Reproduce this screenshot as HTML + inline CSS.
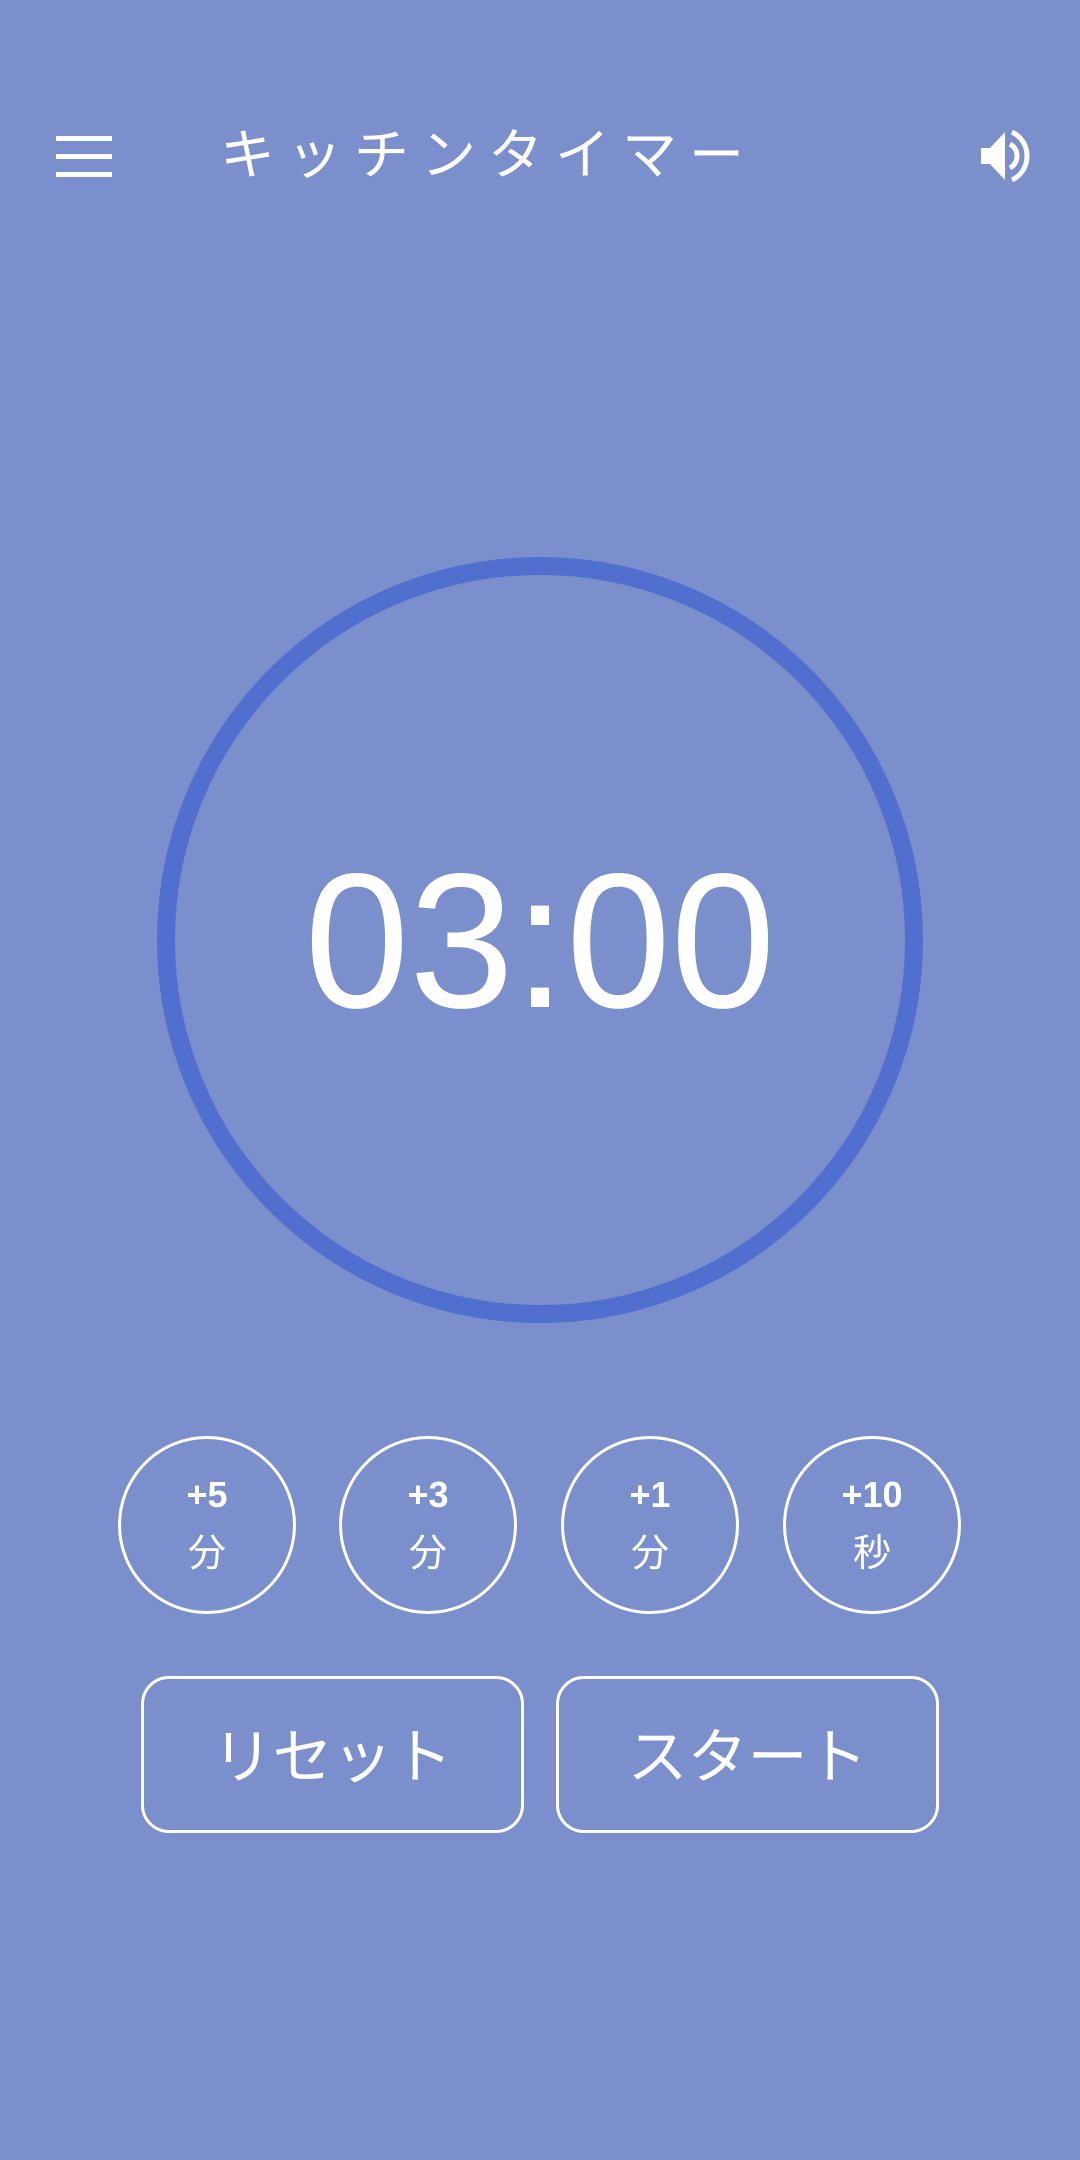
<!DOCTYPE html>
<html><head><meta charset="utf-8"><style>
html,body{margin:0;padding:0}
body{width:1080px;height:2160px;background:#7b8fcc;position:relative;overflow:hidden;font-family:"Liberation Sans","Noto Sans CJK JP",sans-serif;color:#fff}
.abs{position:absolute}
.hb{left:56px;width:56px;height:5px;background:#fff}
.title{left:220px;top:120px;font-size:55px;line-height:70px;white-space:nowrap;letter-spacing:12px}
.sc{width:178px;height:178px;border:3px solid #fff;border-radius:50%;box-sizing:border-box;text-align:center}
.sc b{display:block;font-size:36px;margin-top:36px;line-height:40px}
.sc span{display:block;font-size:38px;line-height:46px;margin-top:16px}
.rb{top:1676px;width:383px;height:157px;border:3px solid #fff;border-radius:28px;box-sizing:border-box;text-align:center;font-size:60px;line-height:158px}
</style></head><body>
<div class="abs hb" style="top:136px"></div>
<div class="abs hb" style="top:154px"></div>
<div class="abs hb" style="top:172px"></div>
<div class="abs title">キッチンタイマー</div>
<svg class="abs" style="left:978px;top:128px" width="60" height="56" viewBox="0 0 60 56">
<path d="M3 20h9l15-16v48L12 36H3z" fill="#fff"/>
<path d="M32 16c5 3 7 7 7 12s-2 9-7 12" stroke="#fff" stroke-width="5" fill="none"/>
<path d="M34 4c10 5 15 14 15 24s-5 19-15 24" stroke="#fff" stroke-width="5" fill="none"/>
</svg>
<svg class="abs" style="left:0;top:0" width="1080" height="1400">
<circle cx="540" cy="940" r="374" fill="none" stroke="#506fcf" stroke-width="18"/>
</svg>
<div class="abs" style="left:0;width:1080px;top:836px;text-align:center;font-size:192px;line-height:210px;transform:scaleX(0.98)">03:00</div>
<div class="abs sc" style="left:118px;top:1436px"><b>+5</b><span>分</span></div>
<div class="abs sc" style="left:339px;top:1436px"><b>+3</b><span>分</span></div>
<div class="abs sc" style="left:561px;top:1436px"><b>+1</b><span>分</span></div>
<div class="abs sc" style="left:783px;top:1436px"><b>+10</b><span>秒</span></div>
<div class="abs rb" style="left:141px">リセット</div>
<div class="abs rb" style="left:556px">スタート</div>
</body></html>
